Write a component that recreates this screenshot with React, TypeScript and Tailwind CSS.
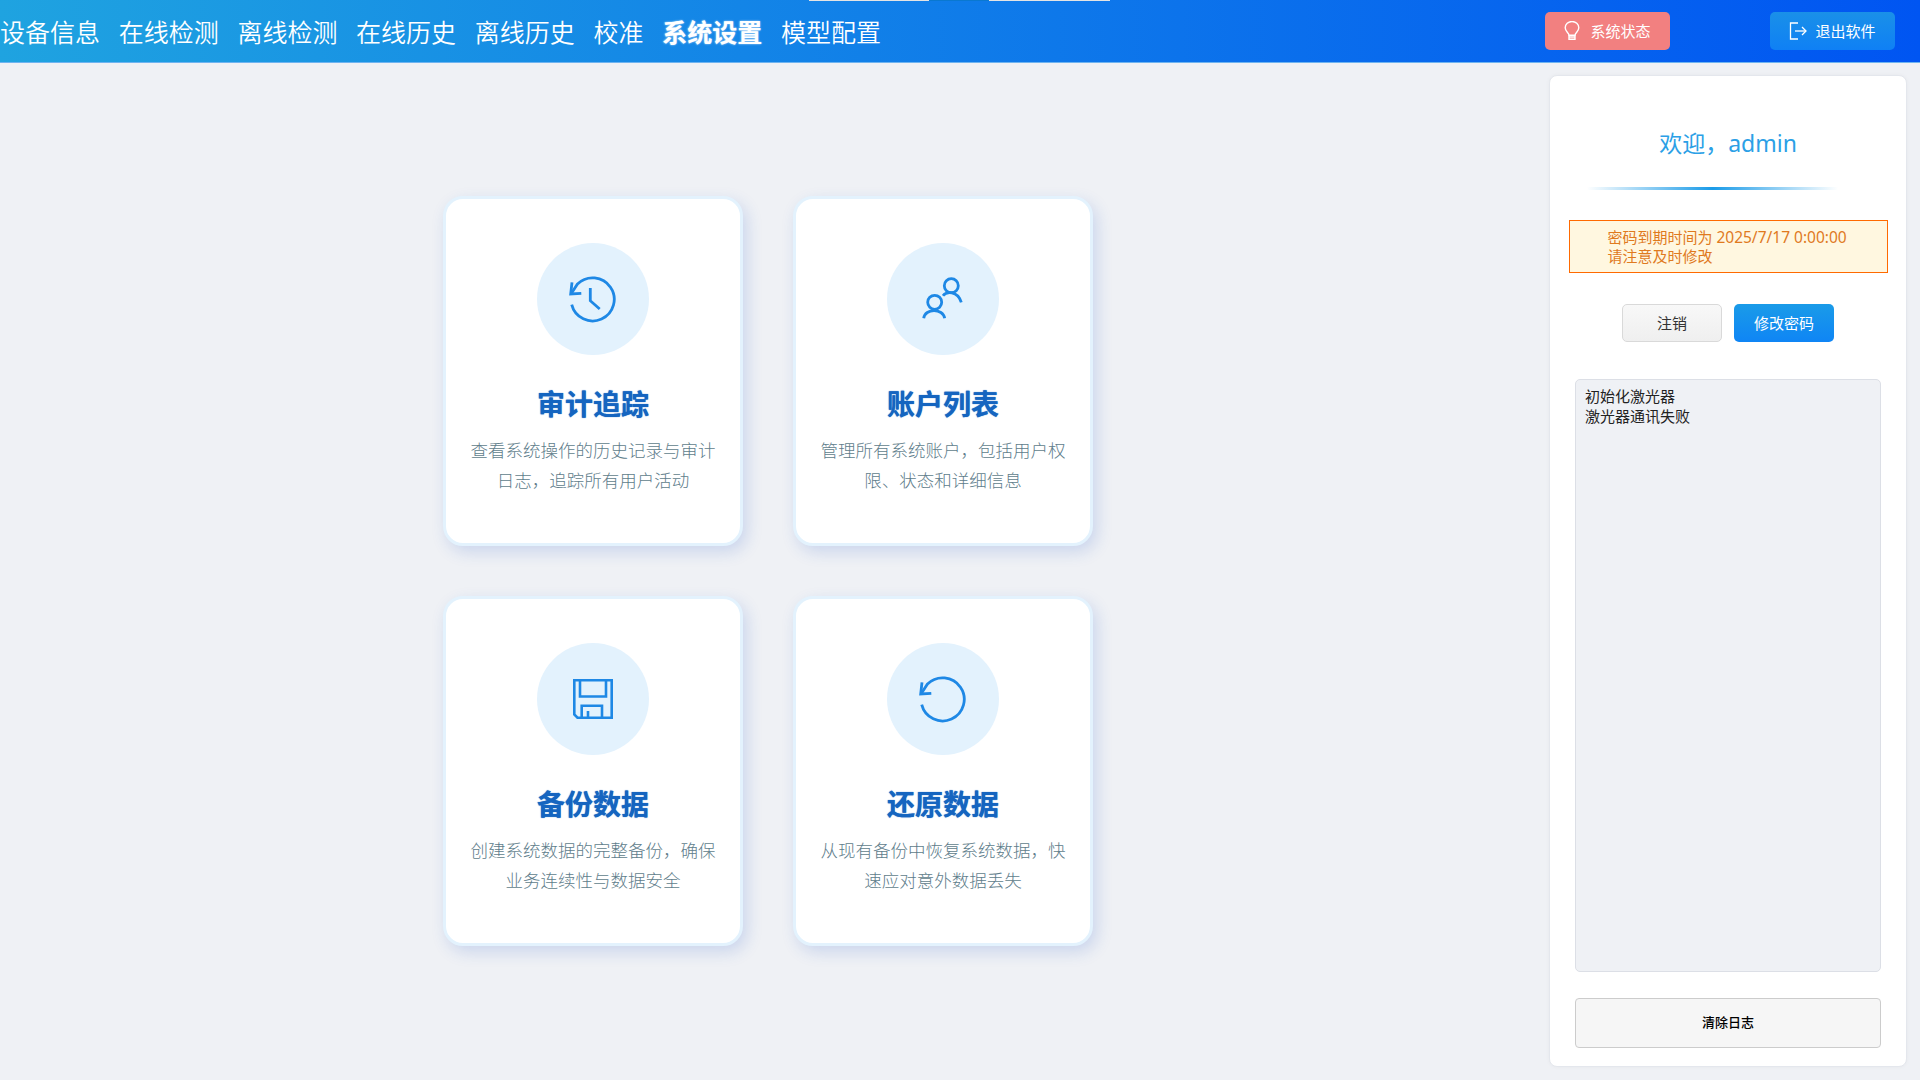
import React from "react";

const font = { fontFamily: '"Noto Sans", "Noto Sans CJK SC", sans-serif' };

function HistoryIcon() {
  return (
    <svg width="48" height="48" viewBox="0 0 48 48" fill="none" stroke="#1e88e5" strokeWidth="2.8">
      <path d="M2.7 29.7A21.6 21.6 0 1 0 8.5 9L2 19" />
      <path d="M3 7.3L1.7 19L12.3 18.3" />
      <path d="M21.3 13V25.7L30.7 34" />
    </svg>
  );
}

function UsersIcon() {
  return (
    <svg width="48" height="48" viewBox="0 0 48 48" fill="none" stroke="#1e88e5" strokeWidth="2.8">
      <circle cx="32.3" cy="10.7" r="7" />
      <circle cx="15.7" cy="27.3" r="7" />
      <path d="M24 20.7C27 16.5 38.5 15 42.3 27.3" />
      <path d="M4.7 43.3C6 33 24 33 25.7 43.3" />
    </svg>
  );
}

function SaveIcon() {
  return (
    <svg width="48" height="48" viewBox="0 0 48 48" fill="none" stroke="#1e88e5" strokeWidth="2.6">
      <path d="M5.3 5.3H42.7V42.7H8.5L5.3 39.5Z" />
      <path d="M11 5.3V21.5H37V5.3" />
      <path d="M12.7 42.7V30.7H33V42.7" />
      <path d="M19 36V42.7" />
    </svg>
  );
}

function RestoreIcon() {
  return (
    <svg width="48" height="48" viewBox="0 0 48 48" fill="none" stroke="#1e88e5" strokeWidth="2.8">
      <path d="M2.7 29.7A21.6 21.6 0 1 0 8.5 9L2 19" />
      <path d="M3 7.3L1.7 19L12.3 18.3" />
    </svg>
  );
}

function BulbIcon() {
  return (
    <svg width="16" height="20" viewBox="0 0 16 20" fill="none" stroke="#ffffff" strokeWidth="1.4">
      <path d="M5 14.2C5 12 1.2 10.5 1.2 6.8A6.8 6.3 0 0 1 14.8 6.8C14.8 10.5 11 12 11 14.2Z" />
      <path d="M5 14.2V18.3H11V14.2" />
      <path d="M5 16H11" />
    </svg>
  );
}

function ExitIcon() {
  return (
    <svg width="18" height="18" viewBox="0 0 18 18" fill="none" stroke="#ffffff" strokeWidth="1.3">
      <path d="M9 1H1.5V17H9" />
      <path d="M6 9H17" />
      <path d="M13 5L17 9L13 13" />
    </svg>
  );
}

const nav = ["设备信息", "在线检测", "离线检测", "在线历史", "离线历史", "校准", "系统设置", "模型配置"];

const cards = [
  { icon: <HistoryIcon />, title: "审计追踪", lines: ["查看系统操作的历史记录与审计", "日志，追踪所有用户活动"] },
  { icon: <UsersIcon />, title: "账户列表", lines: ["管理所有系统账户，包括用户权", "限、状态和详细信息"] },
  { icon: <SaveIcon />, title: "备份数据", lines: ["创建系统数据的完整备份，确保", "业务连续性与数据安全"] },
  { icon: <RestoreIcon />, title: "还原数据", lines: ["从现有备份中恢复系统数据，快", "速应对意外数据丢失"] },
];

function Card({ icon, title, lines }: { icon: React.ReactNode; title: string; lines: string[] }) {
  return (
    <div className="flex h-[350px] w-[300px] flex-col items-center rounded-[20px] border-[3px] border-[#e3f2fd] bg-white pt-[44px] shadow-[4px_6px_16px_rgba(40,90,200,0.18)]">
      <div className="flex h-[112px] w-[112px] items-center justify-center rounded-full bg-[#e3f2fd]">{icon}</div>
      <div className="mt-[31px] text-[28px] font-bold leading-[36px] text-[#1565c0] [text-shadow:0_0_1px_#1565c0]">{title}</div>
      <div className="mt-[13px] text-center text-[17.5px] font-light leading-[30px] text-[#607d8b]">
        {lines.map((l) => (
          <div key={l}>{l}</div>
        ))}
      </div>
    </div>
  );
}

export default function App() {
  return (
    <div className="flex h-[1080px] w-[1920px] flex-col overflow-hidden bg-[#eff1f5]" style={font}>
      <header className="relative flex h-[63px] shrink-0 items-center justify-between border-b border-[#6fb4f0] bg-linear-to-r/srgb from-[#1fa3e0] to-[#0055f2] pr-[25px]">
        <div className="absolute left-[809px] top-0 flex h-[1px]">
          <div className="h-full w-[120px] bg-[#e4e4e4]" />
          <div className="h-full w-[60px] bg-[#0a78d0]" />
          <div className="h-full w-[121px] bg-[#e4e4e4]" />
        </div>
        <nav className="flex items-center gap-[18.7px] pt-[1px]">
          {nav.map((n) => (
            <span key={n} className={n === "系统设置" ? "text-[25px] font-bold leading-[34px] text-white [text-shadow:0_0_2px_rgba(255,255,255,0.8)]" : "text-[25px] font-[350] leading-[34px] text-white"}>
              {n}
            </span>
          ))}
        </nav>
        <div className="flex items-center gap-[100px]">
          <button className="flex h-[38px] w-[125px] items-center justify-center gap-[10px] rounded-[5px] bg-[#f28080] text-[15px] text-white">
            <BulbIcon />
            <span>系统状态</span>
          </button>
          <button className="flex h-[38px] w-[125px] items-center justify-center gap-[8px] rounded-[5px] bg-linear-to-b/srgb from-[#1a90e8] to-[#0f80f5] text-[15px] text-white">
            <ExitIcon />
            <span>退出软件</span>
          </button>
        </div>
      </header>

      <main className="flex min-h-0 flex-1 pt-[12px] pr-[13px]">
        <div className="flex flex-1 justify-start pl-[443px] pt-[121px]">
          <div className="grid grid-cols-[300px_300px] grid-rows-[350px_350px] gap-x-[50px] gap-y-[50px] self-start">
            {cards.map((c) => (
              <Card key={c.title} {...c} />
            ))}
          </div>
        </div>

        <aside className="flex h-[992px] w-[358px] flex-col items-center rounded-[8px] border border-[#e4e7ed] bg-white px-[19px] shadow-[0_0_4px_rgba(0,0,0,0.04)]">
          <div className="mt-[50px] text-[23px] leading-[34px] text-[#2ba0e6]">欢迎，admin</div>
          <div className="ml-[18px] mt-[27px] h-[3px] w-[251px] self-start bg-linear-to-r/srgb from-transparent via-[#1a9be8] to-transparent" />
          <div className="mt-[30px] flex h-[53px] w-[319px] flex-col justify-center border border-[#ff6a00] bg-[#fff7e0] pl-[38px] text-[15px] leading-[19px] text-[#e07a1e]">
            <div>
              密码到期时间为 <span className="text-[15.5px]">2025/7/17 0:00:00</span>
            </div>
            <div>请注意及时修改</div>
          </div>
          <div className="mt-[31px] flex gap-[12px]">
            <button className="h-[38px] w-[100px] rounded-[5px] border border-[#d9d9d9] bg-linear-to-b/srgb from-[#f8f8f8] to-[#efefef] text-[15px] text-[#333333]">注销</button>
            <button className="h-[38px] w-[100px] rounded-[5px] bg-linear-to-b/srgb from-[#1a9be8] to-[#0f85f5] text-[15px] text-white">修改密码</button>
          </div>
          <div className="mt-[37px] h-[593px] w-[306px] rounded-[5px] border border-[#dcdfe6] bg-[#eff1f5] px-[9px] py-[6px] text-[15px] leading-[20px] text-[#222222]">
            <div>初始化激光器</div>
            <div>激光器通讯失败</div>
          </div>
          <button className="mt-[26px] h-[50px] w-[306px] rounded-[4px] border border-[#cccccc] bg-[#f6f6f6] text-[13px] font-medium text-black">清除日志</button>
        </aside>
      </main>
    </div>
  );
}
